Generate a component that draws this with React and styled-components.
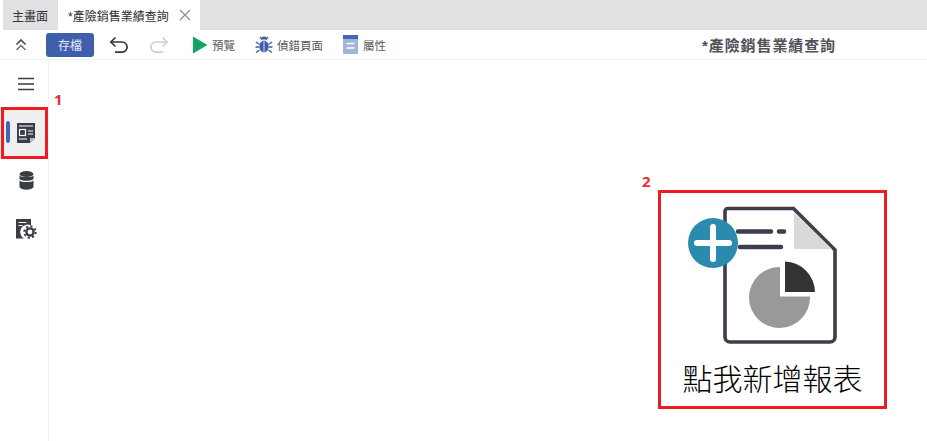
import React from 'react';
import styled, { createGlobalStyle } from 'styled-components';

const GlobalStyle = createGlobalStyle`
  html, body { margin: 0; padding: 0; background: #fff; }
  body {
    width: 927px;
    height: 441px;
    overflow: hidden;
    font-family: "Liberation Sans", "Noto Sans CJK TC", sans-serif;
  }
`;

const Page = styled.div`
  position: relative;
  width: 927px;
  height: 441px;
  display: flex;
  flex-direction: column;
  color: #3a3c46;
`;

const TabBar = styled.div`
  display: flex;
  height: 30px;
  margin-left: 3px;
  background: #e1e1e3;
`;

const Tab = styled.div`
  display: flex;
  align-items: center;
  gap: 10px;
  font-size: 12px;
  padding: 0 ${(p) => (p.$active ? '9px' : '0')} 0 ${(p) => (p.$active ? '10px' : '9px')};
  width: ${(p) => (p.$active ? 'auto' : '55px')};
  box-sizing: border-box;
  background: ${(p) => (p.$active ? '#fff' : 'transparent')};
  color: #2d2d33;
`;

const Toolbar = styled.div`
  display: flex;
  align-items: center;
  height: 29px;
  border-bottom: 1px solid #f0f0f1;
`;

const Collapse = styled.div`
  width: 46px;
  padding-left: 15px;
  box-sizing: border-box;
  display: flex;
`;

const SaveButton = styled.button`
  width: 48px;
  height: 24px;
  border: none;
  border-radius: 3px;
  background: #3f5fab;
  color: #e6ebf5;
  font: 12px "Liberation Sans", "Noto Sans CJK TC", sans-serif;
  padding: 0;
  margin-right: 15px;
`;

const ToolButton = styled.div`
  display: flex;
  align-items: center;
  gap: ${(p) => p.$gap || 4}px;
  margin-right: ${(p) => p.$after || 0}px;
  font-size: 11.5px;
  color: #55575f;
`;

const DocTitle = styled.div`
  margin-left: auto;
  margin-right: 91px;
  font-size: 15px;
  font-weight: 700;
  letter-spacing: 0.9px;
  color: #50525a;
`;

const Body = styled.div`
  flex: 1;
  display: flex;
`;

const Sidebar = styled.nav`
  width: 48px;
  border-right: 1px solid #f0f0f1;
  display: flex;
  flex-direction: column;
  align-items: center;
  padding-top: 14px;
`;

const SideItem = styled.div`
  width: 100%;
  height: ${(p) => p.$h}px;
  box-sizing: border-box;
  padding-left: 4px;
  display: flex;
  align-items: center;
  justify-content: center;
  position: relative;
  background: ${(p) => (p.$active ? '#efefef' : 'transparent')};
  margin-bottom: ${(p) => p.$after || 0}px;
`;

const ActiveBar = styled.span`
  position: absolute;
  left: 6px;
  top: 14px;
  width: 4px;
  height: 22px;
  border-radius: 2px;
  background: #4166b5;
`;

const Canvas = styled.main`
  flex: 1;
  display: flex;
  justify-content: flex-end;
  align-items: flex-start;
  padding: 130px 40px 0 0;
`;

const AddReport = styled.div`
  width: 229px;
  height: 219px;
  box-sizing: border-box;
  border: 3px solid #ed1c24;
  display: flex;
  flex-direction: column;
  align-items: center;
  padding-top: 12px;
`;

const AddIcon = styled.svg`
  display: block;
  align-self: flex-start;
  margin-left: 24px;
`;

const AddLabel = styled.div`
  margin-top: 10px;
  font-size: 30px;
  line-height: 44px;
  font-weight: 300;
  color: #000;
  font-family: "Noto Sans CJK TC", sans-serif;
  white-space: nowrap;
`;

const Highlight = styled.div`
  position: absolute;
  left: 1px;
  top: 107px;
  width: 47px;
  height: 52px;
  box-sizing: border-box;
  border: 3px solid #ed1c24;
`;

const Marker = styled.span`
  position: absolute;
  left: ${(p) => p.$x}px;
  top: ${(p) => p.$y}px;
  font: 700 15px/16px "Open Sans", sans-serif;
  color: #ed2a35;
`;

const Close = () => (
  <svg width="12" height="12" viewBox="0 0 12 12" fill="none" stroke="#8a8a8e" strokeWidth="1.1">
    <path d="M1 1l10 10M11 1L1 11" />
  </svg>
);

const App = () => (
  <>
    <GlobalStyle />
    <Page>
      <TabBar>
        <Tab>主畫面</Tab>
        <Tab $active>
          *產險銷售業績查詢
          <Close />
        </Tab>
      </TabBar>
      <Toolbar>
        <Collapse>
          <svg width="12" height="14" viewBox="0 0 12 14" fill="none" stroke="#4a4c55" strokeWidth="1.6">
            <path d="M1.5 6.5L6 2l4.5 4.5" />
            <path d="M1.5 12L6 7.5 10.500 12" stroke="#777" />
          </svg>
        </Collapse>
        <SaveButton>存檔</SaveButton>
        <ToolButton $after={20}>
          <svg width="20" height="18" viewBox="0 0 20 18" fill="none" stroke="#35363c" strokeWidth="1.7">
            <path d="M6.5 1.5L1.8 6l4.7 4.5" />
            <path d="M2 6h11a5 5 0 0 1 0 10.2H6" />
          </svg>
        </ToolButton>
        <ToolButton $after={23}>
          <svg width="20" height="18" viewBox="0 0 20 18" fill="none" stroke="#cfcfd2" strokeWidth="1.7">
            <path d="M13.5 1.5L18.2 6l-4.7 4.5" />
            <path d="M18 6H7a5 5 0 0 0 0 10.2h7" />
          </svg>
        </ToolButton>
        <ToolButton $after={20}>
          <svg width="16" height="18" viewBox="0 0 16 18">
            <path d="M1 0.5L15.5 9 1 17.5z" fill="#13a567" />
          </svg>
          預覽
        </ToolButton>
        <ToolButton $gap={4} $after={20}>
          <svg width="18" height="18" viewBox="0 0 18 18" fill="#3f5fab" stroke="#3f5fab">
            <ellipse cx="9" cy="10.5" rx="4.6" ry="6" stroke="none" />
            <path d="M6 3.5a3 3 0 0 1 6 0z" stroke="none" />
            <path d="M5 1l2 2.5M13 1l-2 2.5M1 6l3.5 2.5M17 6l-3.5 2.5M0.5 11H4.5M17.5 11H13.5M1 16.5l3.5-2.5M17 16.5L13.5 14" fill="none" strokeWidth="1.4" />
            <path d="M9 5v11.5" stroke="#fff" strokeWidth="0.8" />
          </svg>
          偵錯頁面
        </ToolButton>
        <ToolButton $gap={5}>
          <svg width="15" height="19" viewBox="0 0 15 19">
            <rect width="15" height="19" rx="1" fill="#a3b4da" />
            <rect width="15" height="4" fill="#4166b5" />
            <path d="M3.5 8.5h8M3.5 13h8" stroke="#fff" strokeWidth="1.4" />
          </svg>
          屬性
        </ToolButton>
        <DocTitle>*產險銷售業績查詢</DocTitle>
      </Toolbar>
      <Body>
        <Sidebar>
          <SideItem $h={20} $after={13}>
            <svg width="16" height="14" viewBox="0 0 16 14" stroke="#3a3c46" strokeWidth="1.6">
              <path d="M0 1.5h16M0 7h16M0 12.5h16" />
            </svg>
          </SideItem>
          <SideItem $active $h={52} $after={9}>
            <ActiveBar />
            <svg width="18" height="20" viewBox="0 0 18 20">
              <path d="M0 0h18v15l-5 5H0z" fill="#3a3c46" />
              <path d="M13 20v-5h5z" fill="#bbb" />
              <path d="M2 3h14M11 8h5M11 11h5M2 16h8" stroke="#fff" strokeWidth="1.2" />
              <rect x="2.5" y="6.500" width="6" height="6" fill="none" stroke="#fff" strokeWidth="1.2" />
            </svg>
          </SideItem>
          <SideItem $h={24} $after={26}>
            <svg width="15" height="19" viewBox="0 0 15 19" fill="#3a3c46">
              <ellipse cx="7.5" cy="3" rx="7" ry="3" />
              <path d="M.5 4.6C2 6.6 13 6.6 14.5 4.6V8C13 10.4 2 10.4.5 8z" />
              <path d="M.5 9.6C2 11.6 13 11.6 14.5 9.6V16C13 19.6 2 19.6.5 16z" />
            </svg>
          </SideItem>
          <SideItem $h={22}>
            <svg width="21" height="20" viewBox="0 0 21 20">
              <path d="M0 0h15v6.500a7 7 0 0 0-7 13H0z" fill="#3a3c46" />
              <path d="M2.500 3.500h8M2.500 6.500h4" stroke="#fff" strokeWidth="1" />
              <circle cx="14" cy="13" r="3.600" fill="none" stroke="#3a3c46" strokeWidth="2.400" />
              <circle cx="14" cy="13" r="5.800" fill="none" stroke="#3a3c46" strokeWidth="1.800" strokeDasharray="2.200 2.300" />
            </svg>
          </SideItem>
        </Sidebar>
        <Canvas>
          <AddReport>
            <AddIcon width="155" height="140" viewBox="685 205 155 140">
              <path
                d="M728 208.500H793.500L835 250V337a5 5 0 0 1-5 5H730a5 5 0 0 1-5-5V211.500a3 3 0 0 1 3-3z"
                fill="#fff"
                stroke="#3c3e4a"
                strokeWidth="3.600"
              />
              <path d="M794 212L832 249H794z" fill="#d9d9d9" />
              <path d="M738 231.500H771M779 231.500H784M740 247H781" stroke="#3c3e4a" strokeWidth="4.500" strokeLinecap="round" />
              <path d="M780 267V296.500H810A30.500 30.500 0 1 1 780 267z" fill="#989a99" />
              <path d="M785 261.500A31 31 0 0 1 815 292H785z" fill="#333" />
              <circle cx="713" cy="243" r="25" fill="#2a8bae" />
              <path d="M713 227V259M697 243H729" stroke="#fff" strokeWidth="6" strokeLinecap="round" />
            </AddIcon>
            <AddLabel>點我新增報表</AddLabel>
          </AddReport>
        </Canvas>
      </Body>
      <Highlight />
      <Marker $x={54} $y={91}>1</Marker>
      <Marker $x={642} $y={173}>2</Marker>
    </Page>
  </>
);

export default App;
